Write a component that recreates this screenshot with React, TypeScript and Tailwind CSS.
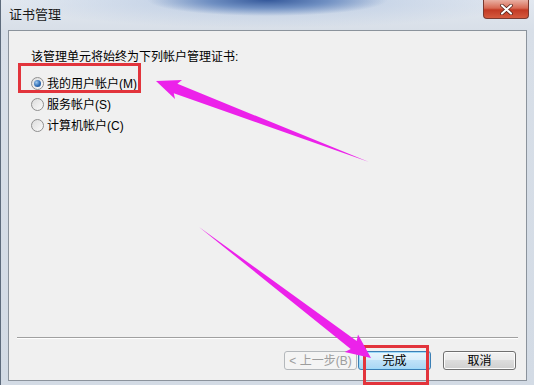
import React from 'react';

const font = "font-['Liberation_Sans','Noto_Sans_CJK_SC',sans-serif]";

const Radio: React.FC<{ label: string; checked?: boolean }> = ({ label, checked }) => (
    <label className="flex h-[21px] items-center">
        <span className="flex h-[13px] w-[13px] items-center justify-center rounded-full border border-[#8f8f8f] bg-[linear-gradient(135deg,#dcdcdc,#fbfbfb)]">
            {checked && (
                <span className="h-[7px] w-[7px] rounded-full bg-[radial-gradient(circle_at_35%_35%,#9cc7ee_0%,#2f6db5_55%,#1b4a86_100%)]" />
            )}
        </span>
        <span className="ml-[3px] text-[12px] leading-4 text-black">{label}</span>
    </label>
);

const Button: React.FC<{ label: string; kind?: 'disabled' | 'default' | 'normal'; className?: string }> = ({ label, kind = 'normal', className }) => {
    const styles =
        kind === 'disabled'
            ? 'border-[#b4b8bc] bg-[#f4f4f4] text-[#9d9d9d]'
            : kind === 'default'
            ? 'border-[#3b7fb5] bg-[linear-gradient(#e9f5fd_0%,#d9eefb_45%,#bfe2f8_50%,#a9d7f5_100%)] text-black shadow-[inset_0_0_0_1px_#9fdbfa]'
            : 'border-[#707070] bg-[linear-gradient(#f2f2f2_0%,#ebebeb_45%,#dddddd_50%,#cfcfcf_100%)] text-black shadow-[inset_0_0_0_1px_#fcfcfc]';
    return (
        <div className={`flex h-[19px] w-[73px] items-center justify-center rounded-[3px] border text-[12px] leading-4 ${styles} ${className ?? ''}`}>
            {label}
        </div>
    );
};

const App: React.FC = () => {
    return (
        <div className={`relative h-[385px] w-[534px] overflow-hidden border-l border-[#5d6b7c] bg-[radial-gradient(ellipse_120px_16px_at_50%_0%,#34589a_0%,#6f8fc2_50%,transparent_100%),radial-gradient(ellipse_260px_28px_at_50%_0%,#b6c8e2_0%,transparent_100%),linear-gradient(#e2e8f0,#d8dfe8_30px,#d3dbe5)] ${font}`}>
            {/* title bar */}
            <div className="flex h-[30px] items-start">
                <span className="ml-[8px] mt-[7px] text-[13px] leading-4 text-[#1a1a1a]">证书管理</span>
                <div className="ml-auto mr-[5px] flex h-[19px] w-[46px] items-center justify-center rounded-b-[4px] border border-t-0 border-[#7a3a30] bg-[linear-gradient(#e9b0a3_0%,#d86a54_45%,#c23a24_55%,#d55a3e_100%)]">
                    <svg width="13" height="11" viewBox="0 0 13 11">
                        <path d="M2 1.5 L11 9.5 M11 1.5 L2 9.5" stroke="#4a1b12" strokeWidth="3.6" strokeLinecap="round" />
                        <path d="M2 1.5 L11 9.5 M11 1.5 L2 9.5" stroke="#ffffff" strokeWidth="2.2" strokeLinecap="round" />
                    </svg>
                </div>
            </div>

            {/* client area */}
            <div className="mx-[7px] flex h-[351px] flex-col border border-[#8b939c] bg-[#f0f0f0]">
                <div className="pl-[22px] pt-[18px]">
                    <p className="text-[12px] leading-4 text-black">该管理单元将始终为下列帐户管理证书:</p>
                    <div className="mt-[8px] flex flex-col">
                        <Radio label="我的用户帐户(M)" checked />
                        <Radio label="服务帐户(S)" />
                        <Radio label="计算机帐户(C)" />
                    </div>
                </div>
                <div className="flex-1" />
                <div className="mx-[8px] border-t border-[#a0a0a0] shadow-[0_1px_0_#ffffff]" />
                <div className="flex items-center justify-end pb-[10px] pr-[10px] pt-[13px]">
                    <Button label="< 上一步(B)" kind="disabled" />
                    <Button label="完成" kind="default" className="ml-[1px]" />
                    <Button label="取消" className="ml-[12px]" />
                </div>
            </div>

            {/* annotations */}
            <div className="absolute left-[17px] top-[63px] h-[30px] w-[123px] border-[3px] border-[#e2343c]" />
            <div className="absolute left-[362px] top-[345px] h-[40px] w-[66px] border-[3px] border-[#e2343c]" />
            <svg className="absolute left-0 top-0" width="534" height="385" viewBox="0 0 534 385">
                <polygon points="155,81 181,80 176.4,83.8 368,162 172.8,93.2 174,99" fill="#ec22ea" />
                <polygon points="370,358 357,334.5 355.7,341 198,227 349.7,349 343.7,352" fill="#ec22ea" />
            </svg>
        </div>
    );
};

export default App;
